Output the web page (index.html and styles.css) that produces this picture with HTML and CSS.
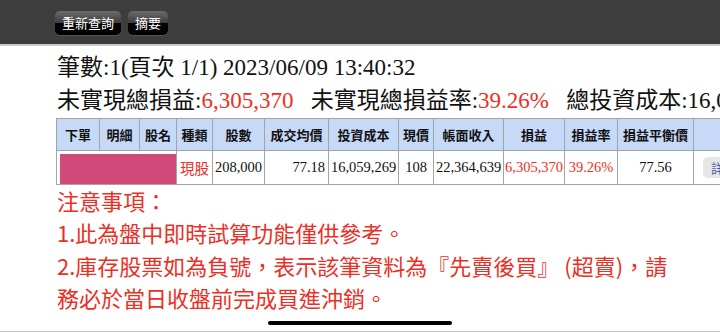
FILE: index.html
```html
<!DOCTYPE html>
<html lang="zh-Hant">
<head>
<meta charset="utf-8">
<link rel="stylesheet" href="styles.css">
</head>
<body>
<header class="topbar">
  <button class="tbtn">重新查詢</button>
  <button class="tbtn">摘要</button>
</header>
<main class="content">
  <div class="line">筆數:1(頁次 1/1) 2023/06/09 13:40:32</div>
  <div class="line line2">未實現總損益:<span class="red">6,305,370</span>&nbsp;&nbsp;&nbsp;未實現總損益率:<span class="red">39.26%</span>&nbsp;&nbsp;&nbsp;總投資成本:16,059,269</div>
  <table class="grid">
    <colgroup>
      <col style="width:43px"><col style="width:40px"><col style="width:37px"><col style="width:36px"><col style="width:52px"><col style="width:64px"><col style="width:70px"><col style="width:35px"><col style="width:70px"><col style="width:61px"><col style="width:53px"><col style="width:76px"><col style="width:60px">
    </colgroup>
    <thead>
      <tr class="hrow"><th>下單</th><th>明細</th><th>股名</th><th>種類</th><th>股數</th><th>成交均價</th><th>投資成本</th><th>現價</th><th>帳面收入</th><th>損益</th><th>損益率</th><th>損益平衡價</th><th></th></tr>
    </thead>
    <tbody>
      <tr class="drow">
        <td colspan="3" class="pinkcell"><div class="pink"></div></td>
        <td class="kind">現股</td>
        <td class="num c">208,000</td>
        <td class="num r">77.18</td>
        <td class="num c">16,059,269</td>
        <td class="num c">108</td>
        <td class="num c">22,364,639</td>
        <td class="num c red">6,305,370</td>
        <td class="num c red">39.26%</td>
        <td class="num c">77.56</td>
        <td class="btncell"><span class="detail">詳細</span></td>
      </tr>
    </tbody>
  </table>
  <div class="notes">
    <p>注意事項：</p>
    <p>1.此為盤中即時試算功能僅供參考。</p>
    <p>2.庫存股票如為負號，表示該筆資料為『先賣後買』 (超賣)，請</p>
    <p>務必於當日收盤前完成買進沖銷。</p>
  </div>
</main>
<div class="homebar"></div>
</body>
</html>
```
FILE: styles.css
```css
html, body {
  margin: 0;
  padding: 0;
  width: 720px;
  height: 332px;
  overflow: hidden;
  background: #fff;
}
body {
  position: relative;
  font-family: "Liberation Serif", "Noto Sans CJK TC", serif;
  color: #111;
}
.topbar {
  box-sizing: border-box;
  height: 46px;
  background: #3d3d3d;
  border-bottom: 2px solid #c9c9c9;
  display: flex;
  align-items: flex-start;
  padding: 11px 0 0 55px;
  gap: 7px;
}
.tbtn {
  height: 24px;
  padding: 0 7px;
  border: none;
  border-radius: 5px;
  background: linear-gradient(#6a6a6a 0%, #404040 48%, #050505 52%, #000 100%);
  color: #fff;
  font-family: "Noto Sans CJK TC", sans-serif;
  font-size: 13px;
  line-height: 24px;
  box-shadow: 0 1px 0 #555;
}
.content {
  padding: 0 0 0 57px;
  white-space: nowrap;
}
.line {
  font-size: 23px;
  line-height: 33px;
  height: 33px;
  margin-top: 5px;
}
.line2 {
  margin-top: 0;
  height: 34px;
}
.red { color: #ec2f26; }
.grid {
  border-collapse: collapse;
  table-layout: fixed;
  width: 697px;
  margin-left: -1px;
  border: 1px solid #999;
}
.grid th, .grid td {
  border: 1px solid #a4a4a4;
  padding: 0;
  overflow: hidden;
  white-space: nowrap;
}
.hrow { height: 32px; }
.drow { height: 33px; }
.grid th {
  background: #c6d9f7;
  font-family: "Noto Sans CJK TC", sans-serif;
  font-weight: bold;
  font-size: 13px;
  color: #111;
}
.grid td {
  font-size: 14.5px;
}
.num { font-family: "Liberation Serif", serif; }
.c { text-align: center; }
.r { text-align: right; padding-right: 3px !important; }
.kind {
  text-align: center;
  color: #ec2f26;
  font-family: "Noto Sans CJK TC", sans-serif;
  font-size: 14px;
}
.pinkcell { padding: 3px 0 0 3px !important; vertical-align: top; }
.pink {
  height: 30px;
  background: #d24a7a;
}
.btncell { padding-left: 9px !important; }
.detail {
  display: inline-block;
  background: #e6e6e6;
  border-radius: 5px;
  padding: 1px 8px;
  color: #3b5fb0;
  font-family: "Noto Sans CJK TC", sans-serif;
  font-size: 13px;
}
.notes {
  color: #ec2f26;
  font-family: "Noto Sans CJK TC", sans-serif;
  font-size: 22px;
  margin-top: -1px;
}
.notes p {
  margin: 0;
  line-height: 32.4px;
}
.homebar {
  position: absolute;
  left: 268px;
  top: 321px;
  width: 184px;
  height: 4px;
  border-radius: 2px;
  background: #000;
}
body::after {
  content: "";
  position: absolute;
  left: 0;
  right: 0;
  bottom: 0;
  height: 1px;
  background: #c8c8c8;
}
```
